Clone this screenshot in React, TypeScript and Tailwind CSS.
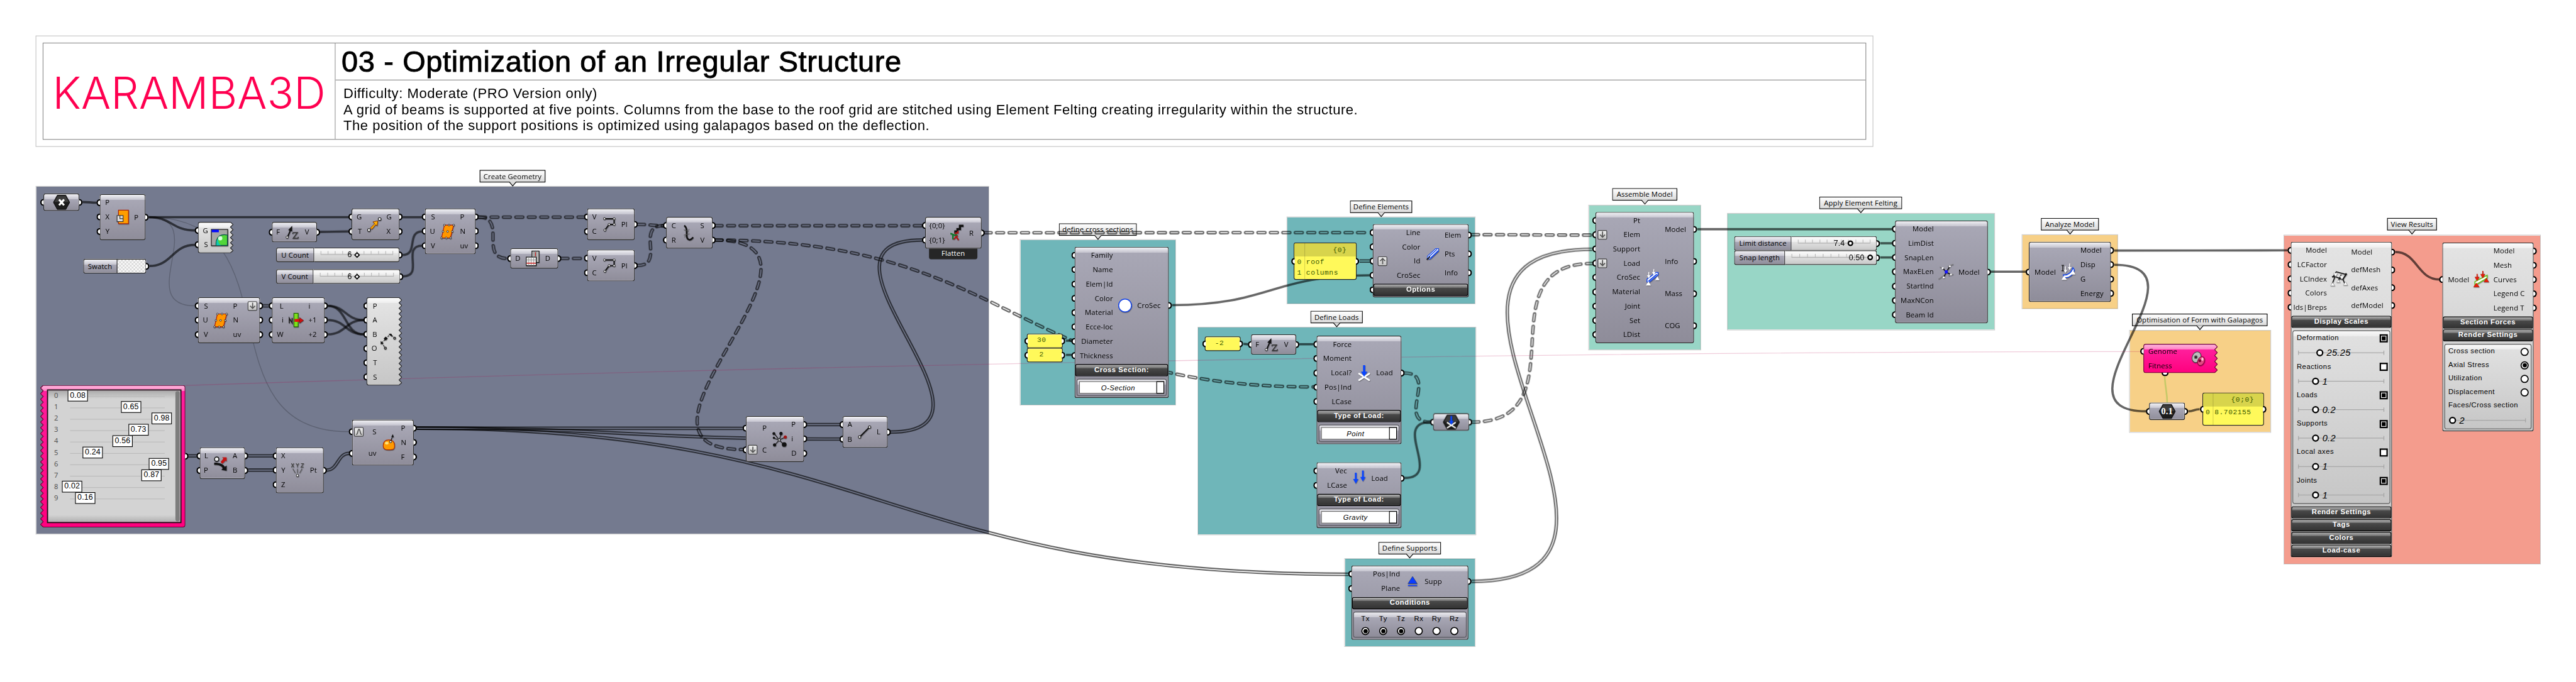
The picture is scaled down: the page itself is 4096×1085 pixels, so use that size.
import React from "react";

/* ---------- wires ---------- */

type WireKind = "single" | "double" | "dashed" | "thin";
type Wire = [WireKind, number, number, number, number];

const wires: Wire[] = [
  ["single", 232, 568, 272, 570],
  ["single", 418, 610.6, 980, 610.6],
  ["single", 418, 610.6, 548, 648],
  ["single", 420, 748, 548, 688.6],
  ["thin", 418, 610.6, 548, 860],
  ["thin", 418, 610.6, 981, 1214],
  ["double", 739, 860, 756, 860],
  ["single", 899, 652, 980, 650.6],
  ["single", 1131, 610.6, 1187, 610.6],
  ["single", 1131, 717, 1187, 650.6],
  ["single", 1133, 777, 1187, 690.6],
  ["single", 921, 860, 1022, 900],
  ["single", 921, 860, 1022, 940],
  ["single", 921, 900, 1022, 940],
  ["single", 921, 940, 1022, 900],
  ["dashed", 1345, 610.6, 1642, 610.6],
  ["dashed", 1345, 610.6, 1426, 726.7],
  ["dashed", 1577, 726.7, 1642, 726.7],
  ["dashed", 1792, 630.8, 1864, 634.6],
  ["dashed", 1792, 746.6, 1864, 634.6],
  ["dashed", 2010, 634.6, 2592, 634.6],
  ["dashed", 2010, 675, 3692, 1088],
  ["dashed", 2010, 675, 2088, 1264],
  ["dashed", 2766, 654.5, 3850, 654],
  ["dashed", 4136, 660, 4475, 661],
  ["dashed", 3947, 1049, 4020, 1187],
  ["single", 3947, 1344, 4020, 1187],
  ["dashed", 4137, 1187, 4475, 741],
  ["double", 529, 1282, 553, 1282],
  ["double", 697, 1282, 767, 1282],
  ["double", 697, 1322, 767, 1322],
  ["double", 918, 1322, 981, 1275],
  ["double", 1171, 1204, 2088, 1204.6],
  ["double", 1171, 1204, 2360, 1234.7],
  ["double", 1171, 1204, 3790, 1615],
  ["double", 2268, 1194, 2360, 1194],
  ["double", 2502, 1215, 2592, 675],
  ["double", 4136, 1635, 4475, 701],
  ["single", 2996, 958, 3012, 958],
  ["single", 2996, 998, 3012, 998],
  ["single", 3294, 858, 3850, 774],
  ["double", 3821, 734, 3850, 734],
  ["single", 3495, 967, 3508, 968],
  ["single", 3652, 968, 3692, 968],
  ["single", 4770, 644.5, 5318, 644.5],
  ["single", 5284, 684, 5318, 684],
  ["single", 5284, 724, 5318, 724],
  ["single", 5596, 764, 5694, 764],
  ["single", 5942, 704.6, 6430, 704],
  ["single", 5942, 744.6, 6032, 1156.6],
  ["single", 6150, 1156.6, 6182, 1150.7],
  ["single", 6732, 708.5, 6856, 786],
];

function wirePath([, x0, y0, x1, y1]: Wire) {
  const h = Math.max(Math.abs(x1 - x0) / 2, Math.abs(y1 - y0) * 0.7);
  return `M${x0} ${y0}C${x0 + h} ${y0} ${x1 - h} ${y1} ${x1} ${y1}`;
}

function Wires() {
  return (
    <svg className="pointer-events-none absolute inset-0 h-full w-full" viewBox="0 0 7240 1918" fill="none">
      {wires.map((w, i) => {
        const d = wirePath(w);
        if (w[0] === "thin") return <path key={i} d={d} stroke="#000" strokeOpacity={0.2} strokeWidth={2.5} />;
        if (w[0] === "single") return <path key={i} d={d} stroke="#000" strokeOpacity={0.6} strokeWidth={6.4} />;
        const dash = w[0] === "dashed" ? "19 16" : undefined;
        const cap = w[0] === "dashed" ? "round" : "butt";
        const left = Math.min(w[1], w[3]) - 200;
        const top = Math.min(w[2], w[4]) - 30;
        const width = Math.abs(w[3] - w[1]) + 400;
        const height = Math.abs(w[4] - w[2]) + 60;
        return (
          <g key={i}>
            <mask id={`wire-${i}`} maskUnits="userSpaceOnUse" x={left} y={top} width={width} height={height}>
              <path d={d} stroke="#fff" strokeWidth={10} strokeDasharray={dash} strokeLinecap={cap} />
              <path d={d} stroke="#000" strokeWidth={2.6} strokeDasharray={dash} strokeLinecap={cap} />
            </mask>
            <g mask={`url(#wire-${i})`}>
              <rect x={left} y={top} width={width} height={height} fill="#000" fillOpacity={0.6} />
            </g>
          </g>
        );
      })}
      <path d="M521 1084C2000 1035 4000 990 6015 988.7" stroke="#b4004b" strokeOpacity={0.2} strokeWidth={2.4} />
      <path d="M6084 1058C6085 1090 6091 1100 6091 1134" stroke="#7bbf3a" strokeOpacity={0.4} strokeWidth={4.5} />
    </svg>
  );
}

/* ---------- icons ---------- */

const icons: Record<string, React.ReactNode> = {
  plane: (
    <>
      <rect x="14" y="4" width="28" height="38" fill="#ff9d00" stroke="#a81800" strokeWidth="2" />
      <rect x="10" y="19" width="17" height="17" fill="#ddd" stroke="#333" strokeWidth="2" />
      <path d="M18 19v9h9" stroke="#333" strokeWidth="2" fill="none" />
    </>
  ),
  preview: (
    <>
      <rect x="1" y="1" width="46" height="46" fill="#a6a6a6" stroke="#111" strokeWidth="2" />
      <rect x="2" y="2" width="20" height="7" fill="#0008ff" />
      <path d="M14 46C13 22 26 13 46 17V46Z" fill="#52d63a" stroke="#08564a" strokeWidth="2" />
      <circle cx="26" cy="26" r="6" fill="#d8ffe0" />
      <path d="M15 46c0-12 2-16 5-19 0 9 2 15 8 19z" fill="#10c8b0" />
    </>
  ),
  divide: (
    <>
      <path d="M15 6H41L32 42H7Z" fill="#ff9600" stroke="#b01800" strokeWidth="2" />
      {[[15, 6], [28, 6], [41, 6], [11, 24], [24, 24], [37, 24], [7, 42], [20, 42], [32, 42]].map(([x, y]) => (
        <circle key={`${x}-${y}`} cx={x} cy={y} r="2.4" fill="#eee" stroke="#222" strokeWidth="1.6" />
      ))}
    </>
  ),
  unitz: (
    <>
      <path d="M10 38L20 14" stroke="#111" strokeWidth="3.5" />
      <path d="M12 18L23 6V22Z" fill="#111" />
      <circle cx="9" cy="38" r="3.2" fill="#fff" stroke="#111" strokeWidth="1.6" />
      <path d="M25 25H38L26 41H40M25 25V29M40 41V37" stroke="#333" strokeWidth="2.6" fill="none" />
    </>
  ),
  move: (
    <>
      <path d="M13 34L25 22L20 17L34 14L32 28L28 25L17 38Z" fill="#ffae00" stroke="#7a2a00" strokeWidth="1.6" />
      <circle cx="9" cy="40" r="4" fill="#fff" stroke="#222" strokeWidth="2" />
      <circle cx="39" cy="9" r="4" fill="#fff" stroke="#222" strokeWidth="2" />
    </>
  ),
  relitem: (
    <>
      <path d="M5 32V18L13 31V17" stroke="#222" strokeWidth="3" fill="none" />
      <rect x="18" y="4" width="12" height="38" fill="#7be01c" stroke="#1c5f00" strokeWidth="2" />
      <rect x="20" y="20" width="14" height="8" fill="#e01010" />
      <path d="M34 16L45 24L34 32Z" fill="#d01010" stroke="#500" />
    </>
  ),
  curve: (
    <>
      <path d="M6 28L30 3L42 15M6 28L16 43" stroke="#111" strokeWidth="2" strokeDasharray="5 3" fill="none" />
      <path d="M3 32V23L11 30ZM25 3H34V11Z" fill="#111" />
      <rect x="13" y="12" width="8" height="8" transform="rotate(45 17 16)" fill="#111" />
      <circle cx="16" cy="43" r="3" fill="#888" stroke="#222" strokeWidth="2" />
      <circle cx="42" cy="15" r="3" fill="#888" stroke="#222" strokeWidth="2" />
    </>
  ),
  evalsrf: (
    <>
      <path d="M8 32C8 20 16 16 24 16S40 20 40 32 34 44 24 44 8 42 8 32Z" fill="#ff9a00" stroke="#a82a00" strokeWidth="2" />
      <ellipse cx="18" cy="25" rx="5" ry="4" fill="#ffe27a" />
      <path d="M29 20L34 6" stroke="#111" strokeWidth="2" />
      <path d="M35 0L38 9L31 7Z" fill="#111" />
      <circle cx="29" cy="21" r="3" fill="#fff" stroke="#111" strokeWidth="1.6" />
    </>
  ),
  split: (
    <>
      <circle cx="13" cy="12" r="6" fill="#eee" stroke="#111" strokeWidth="2.4" />
      <path d="M6 22C22 22 32 26 36 34L41 30V45L26 42L30 38C26 30 20 28 6 28Z" fill="#111" />
      <path d="M24 20L32 10L28 7H41V19L38 16L29 25Z" fill="#c01414" />
    </>
  ),
  xyz: (
    <>
      <path d="M6 4L13 15M13 4L6 15M19 4L23 9.5L27 4M23 9.5V15M33 4.5H40L33 14.5H40" stroke="#444" strokeWidth="2" fill="none" />
      <path d="M10 19L17 31M23 19V31M36 19L29 31" stroke="#555" strokeWidth="2" />
      <circle cx="23" cy="38" r="3.2" fill="#fff" stroke="#333" strokeWidth="1.8" />
    </>
  ),
  flip: (
    <>
      <rect x="21" y="3" width="20" height="32" fill="#bbb" stroke="#111" strokeWidth="2" />
      <path d="M27 3v32M34 3v32" stroke="#777" strokeWidth="1.5" />
      <path d="M31 6v12" stroke="#c01414" strokeWidth="2" />
      <rect x="5" y="20" width="28" height="24" fill="#eee" stroke="#111" strokeWidth="2" />
      <path d="M5 28h28M12 20v24M19 20v24M26 20v24" stroke="#888" strokeWidth="1.5" />
      <path d="M6 37h26" stroke="#d01414" strokeWidth="2.5" />
    </>
  ),
  pline: (
    <>
      <path d="M11 8H38V24H24L12 40" stroke="#111" strokeWidth="3.4" fill="none" />
      {[[11, 8], [38, 8], [38, 24], [24, 24], [12, 40]].map(([x, y]) => (
        <circle key={`${x}-${y}`} cx={x} cy={y} r="3" fill="#fff" stroke="#111" strokeWidth="1.6" />
      ))}
    </>
  ),
  explode: (
    <>
      <path d="M13 3C20 8 20 14 20 20V30C20 44 30 48 38 36" stroke="#111" strokeWidth="4.5" fill="none" />
      <path d="M12 15l14 5M12 30l16-4M14 36l4-6M27 13l-5 6" stroke="#555" strokeWidth="1.6" />
    </>
  ),
  entwine: (
    <>
      <path d="M42 4H32V13H25V20H19V26" stroke="#111" strokeWidth="6" fill="none" />
      <path d="M26 18V24H20V32L28 44M26 31L14 42" stroke="#b01818" strokeWidth="4" fill="none" />
      <path d="M5 26C12 26 16 34 24 29M12 30V42" stroke="#0f7a2a" strokeWidth="4" fill="none" />
    </>
  ),
  closest: (
    <>
      <path d="M24 26L10 8M24 26L30 8M24 26L42 18M24 26L12 40M24 26L36 38M24 26L8 21" stroke="#111" strokeWidth="2" />
      <circle cx="9" cy="8" r="4" fill="#111" />
      <circle cx="29" cy="8" r="4.5" fill="#111" />
      <circle cx="9" cy="20" r="3" fill="#111" />
      <circle cx="11" cy="40" r="4.5" fill="#111" />
      <circle cx="38" cy="39" r="6.5" fill="#111" />
      <circle cx="41" cy="18" r="4.5" fill="#a01414" />
      <circle cx="24" cy="26" r="3" fill="#fff" stroke="#111" strokeWidth="1.5" />
    </>
  ),
  line: (
    <>
      <path d="M11 37L37 11" stroke="#111" strokeWidth="3.5" />
      <circle cx="10" cy="38" r="3.5" fill="#fff" stroke="#111" strokeWidth="1.8" />
      <circle cx="38" cy="10" r="3.5" fill="#fff" stroke="#111" strokeWidth="1.8" />
    </>
  ),
  circle: <circle cx="24" cy="24" r="18" fill="#fff" stroke="#1242e8" strokeWidth="2.6" />,
  beam: (
    <>
      <path d="M10 30L33 9H41V16L18 38H10Z" fill="#fff" stroke="#1546e6" strokeWidth="2" />
      <path d="M13 33L37 11M18 36L40 15" stroke="#1546e6" strokeWidth="2.5" />
      <path d="M8 40L17 32" stroke="#111" strokeWidth="3" />
    </>
  ),
  pointload: (
    <>
      <path d="M10 26L38 44M38 26L10 44" stroke="#fff" strokeWidth="5" strokeLinecap="round" />
      <path d="M21 2H27V20H33L24 34L15 20H21Z" fill="#0a45ff" />
    </>
  ),
  gravity: <path d="M12 8H17V26H22L14.5 39L7 26H12ZM32 2H37V20H42L34.5 33L27 20H32Z" fill="#0a45ff" />,
  support: (
    <>
      <path d="M24 10L37 30H11Z" fill="#0a3dff" stroke="#23305a" strokeWidth="1" />
      <path d="M11 35.5H37" stroke="#0a3dff" strokeWidth="2.8" />
    </>
  ),
  assemble: (
    <>
      <path d="M8 36V28L33 9H39V16L15 36Z" fill="#fff" stroke="#1546e6" strokeWidth="2.5" />
      <path d="M12 34L36 14" stroke="#1546e6" strokeWidth="3" />
      <path d="M27 0V13M13 8V22" stroke="#fff" strokeWidth="2.6" />
      <path d="M22 8H32L27 17ZM8 17H18L13 26ZM12 34L19 46H5ZM37 20L43 31H31Z" fill="#fff" />
    </>
  ),
  felting: (
    <>
      <path d="M2 44L20 32M28 8L44 2M6 10L18 14M30 34L44 30" stroke="#777" strokeWidth="2" />
      <path d="M14 13L24 24L34 8M24 24L17 39M24 24L37 31" stroke="#111" strokeWidth="2.6" fill="none" />
      <rect x="20" y="19" width="8" height="9" fill="#1414ff" />
      {[[14, 13], [34, 8], [17, 39], [37, 31]].map(([x, y]) => (
        <circle key={`${x}-${y}`} cx={x} cy={y} r="2.8" fill="#fff" />
      ))}
    </>
  ),
  analyze: (
    <>
      <path d="M5 5H12M8.5 5V20M5 20H12" stroke="#222" strokeWidth="2.2" />
      <path d="M10 32C24 34 34 24 37 12L41 18C38 32 26 42 12 39Z" fill="#fff" stroke="#1546e6" strokeWidth="2.5" />
      <path d="M28 0V14M16 8V24" stroke="#fff" strokeWidth="2.5" />
      <path d="M23 10H33L28 19ZM11 18H21L16 27ZM12 34L20 46H5ZM38 20L44 31H33Z" fill="#fff" />
    </>
  ),
  galapagos: (
    <>
      <ellipse cx="19" cy="20" rx="13" ry="17" transform="rotate(25 19 20)" fill="#bdbdbd" stroke="#444" strokeWidth="2" />
      <circle cx="17" cy="20" r="4.5" fill="#222" stroke="#666" strokeWidth="2" />
      <ellipse cx="33" cy="32" rx="10" ry="14" transform="rotate(25 33 32)" fill="#e24b84" stroke="#8a0036" strokeWidth="2" />
      <circle cx="29" cy="31" r="4.5" fill="#7a0030" />
      <ellipse cx="37" cy="26" rx="3" ry="5" fill="#ffd0e0" />
    </>
  ),
  view: (
    <>
      <path d="M4 40L14 14M20 34L30 12M40 38L34 22M44 8L36 24" stroke="#111" strokeWidth="2.6" />
      <path d="M6 20L16 4L45 12M4 18C14 14 24 24 34 26L46 10" stroke="#111" strokeWidth="2.6" fill="none" />
      <path d="M8 8H20L14 18ZM26 16H38L32 26Z" fill="#fff" stroke="#aaa" />
      <path d="M6 34L12 44H0ZM22 26L27 34H17ZM42 32L48 42H36Z" fill="#fff" stroke="#888" />
    </>
  ),
  beamview: (
    <>
      <path d="M6 30L40 12V20L6 40Z" fill="#fff" stroke="#6fbf1e" strokeWidth="3" />
      <path d="M28 0V12M12 8V20" stroke="#d01808" strokeWidth="3" />
      <path d="M22 9H34L28 20ZM6 17H18L12 28ZM10 34L18 45H2ZM38 20L45 31H31Z" fill="#ee1c08" stroke="#a01000" />
    </>
  ),
};

function Icon({ name, size = 48 }: { name: string; size?: number }) {
  return (
    <svg viewBox="0 0 48 48" fill="none" className="shrink-0 overflow-visible drop-shadow-[1px_2px_1px_rgba(0,0,0,0.35)]" style={{ width: size, height: size }}>
      {icons[name]}
    </svg>
  );
}

/* ---------- building blocks ---------- */

const place = (x: number, y: number, w: number, h: number) => ({ left: x, top: y, width: w, height: h });

const GREY = "rounded-[6px] bg-[linear-gradient(#f0f0f4_2px,#c5c4cf_16px,#a8a7b5_16px,#8e8c99)] shadow-[inset_0_0_0_2px_#262626,inset_0_0_0_3px_rgba(255,255,255,0.35)]";
const LIGHT = "rounded-[6px] bg-[linear-gradient(#fdfdfd_2px,#eeeeee_16px,#e3e3e3_16px,#c6c6c6)] shadow-[inset_0_0_0_2px_#262626,inset_0_0_0_3px_rgba(255,255,255,0.35)]";

function Port({ side }: { side: "l" | "r" }) {
  return side === "l" ? (
    <span className="absolute top-1/2 -left-[9px] h-5 w-[10px] -translate-y-1/2 rounded-l-full border-4 border-r-0 border-black bg-white" />
  ) : (
    <span className="absolute top-1/2 -right-[9px] h-5 w-[10px] -translate-y-1/2 rounded-r-full border-4 border-l-0 border-black bg-white" />
  );
}

function Group({ x, y, w, h, tone }: { x: number; y: number; w: number; h: number; tone: string }) {
  return <div className={`absolute border-2 border-black/20 bg-clip-padding ${tone}`} style={place(x, y, w, h)} />;
}

function Label({ x, y, w, children }: { x: number; y: number; w: number; children: string }) {
  return (
    <div className="absolute flex flex-col items-center" style={{ left: x, top: y, width: w }}>
      <div className="flex h-[35px] w-full items-center justify-center border-2 border-black bg-linear-to-b from-white to-[#dadada] text-[20px] leading-none whitespace-nowrap">
        {children}
      </div>
      <svg viewBox="0 0 22 14" className="-mt-[2px] h-[14px] w-[22px]">
        <path d="M1 0L11 12L21 0" fill="#dadada" stroke="#000" strokeWidth="2" />
      </svg>
    </div>
  );
}

type BodyProps = {
  ins?: string[];
  outs?: string[];
  inW?: number;
  outW?: number;
  icon?: string;
  h: number;
  outButton?: React.ReactNode;
  inButtons?: Record<number, React.ReactNode>;
};

function Body({ ins = [], outs = [], inW = 0, outW = 0, icon, h, outButton, inButtons = {} }: BodyProps) {
  return (
    <div className="flex py-1" style={{ height: h }}>
      <div className="flex flex-col" style={{ width: inW }}>
        {ins.map((t, i) => (
          <div key={i} className="relative flex flex-1 items-center justify-end whitespace-nowrap">
            <Port side="l" />
            {inButtons[i] && <span className="absolute left-[6px]">{inButtons[i]}</span>}
            {t}
          </div>
        ))}
      </div>
      <div className="flex flex-1 items-center justify-center">{icon && <Icon name={icon} />}</div>
      <div className="flex flex-col" style={{ width: outW }}>
        {outs.map((t, i) => (
          <div key={i} className="relative flex flex-1 items-center whitespace-nowrap">
            <Port side="r" />
            {t}
            {i === 0 && outButton && <span className="absolute right-2">{outButton}</span>}
          </div>
        ))}
      </div>
    </div>
  );
}

type NodeProps = Omit<BodyProps, "h"> & {
  x: number;
  y: number;
  w: number;
  h: number;
  bodyH?: number;
  light?: boolean;
  children?: React.ReactNode;
};

function Node({ x, y, w, h, bodyH, light, children, ...body }: NodeProps) {
  return (
    <div className={`absolute ${light ? LIGHT : GREY}`} style={place(x, y, w, h)}>
      <Body h={bodyH ?? h} {...body} />
      {children}
    </div>
  );
}

function ModButton({ kind }: { kind: "down" | "up" | "curve" }) {
  return (
    <span className="flex h-[27px] w-[27px] items-center justify-center rounded-[4px] border-2 border-[#444] bg-linear-to-b from-[#eee] to-[#c4c4c4]">
      <svg viewBox="0 0 20 20" className="h-5 w-5" fill="none" stroke="#555" strokeWidth="3">
        {kind === "down" && <path d="M10 1V17M3 10L10 17L17 10" />}
        {kind === "up" && <path d="M10 19V4M3 10L10 3L17 10" />}
        {kind === "curve" && <path d="M2 18C8 18 6 3 10 3S12 18 18 18" />}
      </svg>
    </span>
  );
}

function Bar({ children }: { children: string }) {
  return (
    <div className="mx-[2px] flex h-[34px] items-center justify-center rounded-[5px] border-2 border-black bg-[linear-gradient(#b4b4b4,#6c6c6c_9px,#4a4a4a_9px,#333)] pb-1 font-['Liberation_Sans',sans-serif] text-[20px] leading-none font-bold tracking-[0.9px] whitespace-nowrap text-white">
      {children}
    </div>
  );
}

function Dropdown({ children }: { children: string }) {
  return (
    <div className="mx-[6px] mt-[7px] h-[49px] rounded-[7px] border-2 border-[#5a5a60] bg-[linear-gradient(#ececf0,#c0bfca_14px,#a3a2b0_14px,#93919f)] p-[5px]">
      <div className="flex h-[35px] border-2 border-[#666] bg-white">
        <div className="flex flex-1 items-center justify-center font-['Liberation_Sans',sans-serif] text-[20px] leading-none tracking-[0.8px] italic">{children}</div>
        <div className="-my-[2px] -mr-[2px] w-[22px] border-2 border-black" />
      </div>
    </div>
  );
}

function jagPath(w: number, h: number) {
  const n = Math.round(h / 16);
  const step = h / n;
  let d = `M${w - 8} 1`;
  for (let i = 0; i < n; i++) d += `L${w - 1} ${(i + 0.5) * step}L${w - 8.5} ${Math.min((i + 1) * step, h - 1)}`;
  return d + `H7Q1 ${h - 1} 1 ${h - 7}V7Q1 1 7 1Z`;
}

function Jagged({ w, h, tone, flip }: { w: number; h: number; tone: "light" | "pink"; flip?: boolean }) {
  const split = 15 / h;
  const c = tone === "pink" ? ["#ffb9de", "#ff7fc4", "#ff1f9c", "#ff007e", "#6d0038"] : ["#fdfdfd", "#eeeeee", "#e3e3e3", "#c6c6c6", "#262626"];
  return (
    <svg viewBox={`0 0 ${w} ${h}`} className={`absolute inset-0 h-full w-full ${flip ? "-scale-x-100" : ""}`}>
      <defs>
        <linearGradient id={`jag-${tone}-${h}`} x1="0" y1="0" x2="0" y2="1">
          <stop offset="0" stopColor={c[0]} />
          <stop offset={split} stopColor={c[1]} />
          <stop offset={split} stopColor={c[2]} />
          <stop offset="1" stopColor={c[3]} />
        </linearGradient>
      </defs>
      <path d={jagPath(w, h)} fill={`url(#jag-${tone}-${h})`} stroke={c[4]} strokeWidth="2" />
    </svg>
  );
}

function JagNode({ x, y, w, h, ...body }: Omit<BodyProps, "h"> & { x: number; y: number; w: number; h: number }) {
  return (
    <div className="absolute" style={place(x, y, w, h)}>
      <Jagged w={w} h={h} tone="light" />
      <div className="relative pr-2">
        <Body h={h} {...body} />
      </div>
    </div>
  );
}

function Param({ x, y, children }: { x: number; y: number; children: React.ReactNode }) {
  return (
    <div className={`absolute flex items-center justify-center ${GREY}`} style={place(x, y, 101, 49)}>
      <Port side="l" />
      <Port side="r" />
      <div className="relative flex h-[42px] w-[48px] items-center justify-center">
        <svg viewBox="0 0 48 42" className="absolute inset-0 h-full w-full">
          <path d="M12 1H36L47 21L36 41H12L1 21Z" fill="#1c1c1c" stroke="#000" strokeWidth="1.5" />
          <path d="M13 3H35L44 20H4Z" fill="#3c3c3c" />
        </svg>
        <div className="relative flex items-center justify-center">{children}</div>
      </div>
    </div>
  );
}

function Slider({ x, y, w, label, labelW, value, knob, shape }: { x: number; y: number; w: number; label: string; labelW: number; value: string; knob: number; shape: "diamond" | "ring" }) {
  return (
    <div className={`absolute flex ${LIGHT}`} style={place(x, y, w, 41)}>
      <div className={`flex items-center justify-center whitespace-nowrap ${GREY} rounded-r-none`} style={{ width: labelW }}>
        {label}
      </div>
      <div className="relative flex-1">
        <div className="absolute inset-x-[18px] top-[10px] flex h-[11px] justify-between border-b-2 border-[#b0b0b0]">
          {Array.from({ length: 11 }, (_, i) => (
            <span key={i} className="w-[2px] bg-[#b8b8b8]" />
          ))}
        </div>
        <div className="absolute top-0 flex h-full -translate-x-full items-center gap-[8px] pb-[2px]" style={{ left: knob }}>
          <span className="font-['Liberation_Sans',sans-serif] text-[22px] leading-none">{value}</span>
          {shape === "diamond" ? (
            <span className="mt-[2px] mr-[1px] block h-[12px] w-[12px] rotate-45 border-[3px] border-black bg-white" />
          ) : (
            <span className="mt-[1px] block h-[16px] w-[16px] rounded-full border-[4px] border-black bg-white" />
          )}
        </div>
      </div>
      <Port side="r" />
    </div>
  );
}

function SmallPanel({ x, y, children }: { x: number; y: number; children: string }) {
  return (
    <div className="absolute flex items-center justify-center rounded-[6px] border-2 border-[#262626] bg-[#fff95a] pr-[18px] pb-1 font-['Liberation_Mono',monospace] text-[20px] tracking-[0.9px] text-[#3c5a00] shadow-[inset_0_1px_0_1px_#fffcb0]" style={place(x, y, 101, 41)}>
      <Port side="l" />
      <Port side="r" />
      {children}
    </div>
  );
}

function DataPanel({ x, y, w, h, path, gutter, rows }: { x: number; y: number; w: number; h: number; path: string; gutter: number; rows: string[] }) {
  return (
    <div className="absolute rounded-[6px] border-2 border-[#262626] bg-[#fff95a] font-['Liberation_Mono',monospace] text-[20px] leading-none tracking-[0.9px] text-[#3c5a00]" style={place(x, y, w, h)}>
      <Port side="l" />
      <Port side="r" />
      <div className="flex h-[37px] items-center justify-end rounded-t-[4px] bg-[#d8d44c] pr-[26px]">{path}</div>
      {rows.map((r, i) => (
        <div key={i} className="flex h-[31px] items-center">
          <span className="text-center" style={{ width: gutter }}>{i}</span>
          <span className="pl-[5px]">{r}</span>
        </div>
      ))}
      <span className="absolute inset-y-0 w-[2px] bg-black/15" style={{ left: gutter }} />
    </div>
  );
}

function Ring({ on }: { on?: boolean }) {
  return (
    <span className="flex h-[23px] w-[23px] items-center justify-center rounded-full border-[3px] border-black bg-white">
      {on && <span className="h-[12px] w-[12px] rounded-full bg-black" />}
    </span>
  );
}

/* ---------- header ---------- */

function Header() {
  return (
    <header className="absolute top-[100px] left-[100px] h-[313px] w-[5165px] border-2 border-[#c4c4c4] bg-white p-[18px]">
      <div className="flex h-full border-2 border-[#8c8c8c]">
        <div className="flex w-[821px] items-center justify-center border-r-2 border-[#9a9a9a] pt-[6px]">
          <span className="font-['Inter',sans-serif] text-[124px] leading-none font-light whitespace-nowrap text-[#ff0050]">KARAMBA3D</span>
        </div>
        <div className="flex flex-1 flex-col font-['Liberation_Sans',sans-serif] text-black">
          <h1 className="flex h-[104px] items-center border-b-2 border-[#8c8c8c] pl-[17px] text-[83px] leading-none tracking-[1.1px] whitespace-nowrap [-webkit-text-stroke:1.6px_#000]">
            03 - Optimization of an Irregular Structure
          </h1>
          <div className="pt-[14px] pl-[22px] text-[39px] leading-[45px] tracking-[0.93px] whitespace-nowrap">
            <p>Difficulty: Moderate (PRO Version only)</p>
            <p>A grid of beams is supported at five points. Columns from the base to the roof grid are stitched using Element Felting creating irregularity within the structure.</p>
            <p>The position of the support positions is optimized using galapagos based on the deflection.</p>
          </div>
        </div>
      </div>
    </header>
  );
}

/* ---------- gene pool ---------- */

const genes = [0.08, 0.65, 0.98, 0.73, 0.56, 0.24, 0.95, 0.87, 0.02, 0.16];

function GenePool() {
  return (
    <div className="absolute top-[1083px] left-[113px] h-[400px] w-[408px]">
      <Jagged w={408} h={400} tone="pink" flip />
      <div className="absolute top-[200px] right-0">
        <Port side="r" />
      </div>
      <div className="relative mt-[12px] ml-[19px] flex h-[376px] w-[378px] border-[3px] border-[#141414] bg-[linear-gradient(#aaa,#d3d3d3_24px,#d3d3d3_350px,#b0b0b0)]">
        <div className="flex flex-1 flex-col">
          {genes.map((g, i) => (
            <div key={i} className="relative flex h-8 items-center">
              <span className="absolute top-[16px] left-[62px] h-[2px] w-[266px] bg-[#bbb]" />
              <span className="w-[34px] pb-[5px] pl-3 text-center font-['Noto_Sans',sans-serif] text-[20px] leading-none text-[#555]">{i}</span>
              <span className="absolute -top-[2px] flex h-[33px] w-[57px] items-center justify-center border-2 border-black bg-white pb-[3px] font-['Liberation_Sans',sans-serif] text-[22px] leading-none" style={{ left: 34 + 262.5 * g }}>
                {g.toFixed(2)}
              </span>
            </div>
          ))}
        </div>
        <div className="my-[2px] mr-[2px] w-3 rounded-full bg-[#7d7d7d]" />
      </div>
    </div>
  );
}

/* ---------- result nodes ---------- */

const scales: [string, boolean, number, string][] = [
  ["Deformation", true, 76, "25.25"],
  ["Reactions", false, 64, "1"],
  ["Loads", true, 64, "0.2"],
  ["Supports", true, 64, "0.2"],
  ["Local axes", false, 64, "1"],
  ["Joints", true, 64, "1"],
];

function ModelView() {
  return (
    <Node light x={6438} y={680} w={285} h={887} bodyH={208} icon="view" inW={102} outW={115} ins={["Model", "LCFactor", "LCIndex", "Colors", "Ids|Breps"]} outs={["Model", "defMesh", "defAxes", "defModel"]}>
      <Bar>Display Scales</Bar>
      <div className="mx-[5px] mt-[7px] mb-[7px] h-[488px] rounded-[7px] border-2 border-[#5a5a5a] bg-[linear-gradient(#fafafa,#ececec_14px,#e0e0e0_14px,#c6c6c6)] font-['Liberation_Sans',sans-serif]">
        {scales.map(([name, on, knob, value]) => (
          <div key={name} className="h-[80.2px]">
            <div className="flex h-[41px] items-center justify-between pr-[5px] pl-[10px]">
              <span className="pb-1 text-[20px] leading-none tracking-[0.9px]">{name}</span>
              <span className="flex h-[23px] w-[23px] items-center justify-center border-[4px] border-black bg-white">
                {on && <span className="h-[11px] w-[11px] bg-black" />}
              </span>
            </div>
            <div className="relative flex h-[39px] items-center">
              <span className="absolute left-[14px] h-3 w-[242px] border-x-2 border-[#a4a4a4]" />
              <span className="absolute left-[14px] h-[2px] w-[242px] bg-[#a4a4a4]" />
              <span className="relative h-5 w-5 shrink-0 rounded-full border-[4px] border-black bg-white" style={{ marginLeft: knob - 11 }} />
              <span className="relative pl-[9px] text-[26px] leading-none tracking-[0.5px] italic">{value}</span>
            </div>
          </div>
        ))}
      </div>
      <div className="flex flex-col gap-[2px]">
        <Bar>Render Settings</Bar>
        <Bar>Tags</Bar>
        <Bar>Colors</Bar>
        <Bar>Load-case</Bar>
      </div>
    </Node>
  );
}

function BeamView() {
  return (
    <Node light x={6864} y={682} w={257} h={531} bodyH={208} icon="beamview" inW={76} outW={113} ins={["Model"]} outs={["Model", "Mesh", "Curves", "Legend C", "Legend T"]}>
      <div className="flex flex-col gap-[2px]">
        <Bar>Section Forces</Bar>
        <Bar>Render Settings</Bar>
      </div>
      <div className="mx-[6px] mt-[7px] h-[240px] rounded-[7px] border-2 border-[#5a5a5a] bg-[linear-gradient(#fafafa,#ececec_14px,#e0e0e0_14px,#c6c6c6)] pt-[1px] font-['Liberation_Sans',sans-serif] text-[20px] leading-none tracking-[0.8px]">
        {["Cross section", "Axial Stress", "Utilization", "Displacement"].map((t) => (
          <div key={t} className="flex h-[38px] items-center justify-between pr-[6px] pl-[9px]">
            <span className="pb-1">{t}</span>
            <Ring on={t === "Axial Stress"} />
          </div>
        ))}
        <div className="flex h-[38px] items-center pb-1 pl-[9px] whitespace-nowrap">Faces/Cross section</div>
        <div className="relative flex h-[44px] items-center">
          <span className="absolute right-[14px] left-[22px] h-[2px] bg-[#a4a4a4]" />
          <span className="absolute right-[14px] h-3 w-[2px] bg-[#a4a4a4]" />
          <span className="relative ml-[11px] h-5 w-5 rounded-full border-[4px] border-black bg-white" />
          <span className="relative pl-[9px] text-[26px] italic">2</span>
        </div>
      </div>
    </Node>
  );
}

/* ---------- canvas ---------- */

export default function App() {
  return (
    <main className="relative h-[1085px] w-[4096px] overflow-hidden bg-white">
      <div className="absolute top-0 left-0 h-[1918px] w-[7240px] origin-top-left scale-[0.56575] font-['Open_Sans','Noto_Sans',sans-serif] text-[20px] leading-none tracking-[0.25px] text-black">
        <Header />

        <Group x={100} y={523} w={2680} h={980} tone="bg-[#747a8f]" />
        <Group x={2866} y={673} w={439} h={467} tone="bg-[#6fb6b9]" />
        <Group x={3616} y={609} w={531} h={246} tone="bg-[#6fb6b9]" />
        <Group x={3366} y={919} w={783} h={586} tone="bg-[#6fb6b9]" />
        <Group x={3778} y={1570} w={369} h={249} tone="bg-[#6fb6b9]" />
        <Group x={4464} y={576} w={317} h={409} tone="bg-[#98d6c6]" />
        <Group x={4854} y={599} w={753} h={330} tone="bg-[#98d6c6]" />
        <Group x={5682} y={659} w={271} h={210} tone="bg-[#f7d087]" />
        <Group x={5984} y={928} w={399} h={289} tone="bg-[#f7d087]" />
        <Group x={6418} y={660} w={723} h={927} tone="bg-[#f49c8d]" />

        <Label x={1348} y={478} w={185}>Create Geometry</Label>
        <Label x={2976} y={628} w={219}>define cross sections</Label>
        <Label x={3794} y={564} w={175}>Define Elements</Label>
        <Label x={3683} y={874} w={147}>Define Loads</Label>
        <Label x={3874} y={1524} w={176}>Define Supports</Label>
        <Label x={4531} y={529} w={183}>Assemble Model</Label>
        <Label x={5113} y={553} w={233}>Apply Element Felting</Label>
        <Label x={5736} y={613} w={163}>Analyze Model</Label>
        <Label x={5992} y={882} w={381}>Optimisation of Form with Galapagos</Label>
        <Label x={6709} y={613} w={140}>View Results</Label>

        <Wires />

        <Param x={122} y={544}>
          <svg viewBox="0 0 20 20" className="h-5 w-5">
            <path d="M3 2L17 18M17 2L3 18" stroke="#fff" strokeWidth="5.5" />
          </svg>
        </Param>
        <Node x={280} y={546} w={129} h={129} icon="plane" inW={28} outW={32} ins={["P", "X", "Y"]} outs={["P"]} />
        <JagNode x={556} y={624} w={100} h={88} icon="preview" inW={29} ins={["G", "S"]} />
        <div className={`absolute flex ${GREY}`} style={place(234, 728, 177, 41)}>
          <div className="flex w-[96px] items-center justify-center border-r-2 border-[#262626]">Swatch</div>
          <div className="my-[2px] mr-[2px] flex-1 rounded-r-[5px] bg-[conic-gradient(#fafafa_25%,#d8d8d8_0_50%,#fafafa_0_75%,#d8d8d8_0)] bg-[size:10px_10px]" />
          <Port side="r" />
        </div>
        <Node x={556} y={836} w={175} h={129} icon="divide" inW={29} outW={76} ins={["S", "U", "V"]} outs={["P", "N", "uv"]} outButton={<ModButton kind="down" />} />
        <Node x={764} y={624} w={127} h={57} icon="unitz" inW={23} outW={34} ins={["F"]} outs={["V"]} />
        <Slider x={776} y={696} w={347} label="U Count" labelW={107} value="6" knob={127} shape="diamond" />
        <Slider x={776} y={757} w={349} label="V Count" labelW={105} value="6" knob={129} shape="diamond" />
        <Node x={988} y={586} w={135} h={89} icon="move" inW={29} outW={37} ins={["G", "T"]} outs={["G", "X"]} />
        <Node x={1194} y={586} w={143} h={129} icon="divide" inW={29} outW={44} ins={["S", "U", "V"]} outs={["P", "N", "uv"]} />
        <Node x={764} y={836} w={149} h={129} icon="relitem" inW={33} outW={46} ins={["L", "i", "W"]} outs={["i", "+1", "+2"]} />
        <JagNode x={1030} y={836} w={100} h={248} icon="curve" inW={30} ins={["P", "A", "B", "O", "T", "S"]} />
        <GenePool />
        <Node x={561} y={1258} w={128} h={89} icon="split" inW={24} outW={35} ins={["L", "P"]} outs={["A", "B"]} />
        <Node x={775} y={1258} w={135} h={129} icon="xyz" inW={27} outW={39} ins={["X", "Y", "Z"]} outs={["Pt"]} />
        <Node x={989} y={1180} w={174} h={129} icon="evalsrf" inW={69} outW={36} ins={["S", "uv"]} outs={["P", "N", "F"]} inButtons={{ 0: <ModButton kind="curve" /> }} />
        <Node x={1434} y={698} w={135} h={57} icon="flip" inW={29} outW={37} ins={["D"]} outs={["D"]} />
        <Node x={1650} y={586} w={134} h={89} icon="pline" inW={27} outW={38} ins={["V", "C"]} outs={["Pl"]} />
        <Node x={1650} y={702} w={134} h={89} icon="pline" inW={27} outW={38} ins={["V", "C"]} outs={["Pl"]} />
        <Node x={1872} y={610} w={131} h={89} icon="explode" inW={28} outW={35} ins={["C", "R"]} outs={["S", "V"]} />
        <div className="absolute flex items-center justify-center rounded-b-[6px] bg-[#262626] text-white" style={place(2611, 697, 136, 32)}>Flatten</div>
        <Node x={2600} y={610} w={159} h={89} icon="entwine" inW={56} outW={35} ins={["{0;0}", "{0;1}"]} outs={["R"]} />
        <Node x={2096} y={1170} w={164} h={129} icon="closest" inW={59} outW={36} ins={["P", "C"]} outs={["P", "i", "D"]} inButtons={{ 1: <ModButton kind="down" /> }} />
        <Node x={2368} y={1170} w={127} h={89} icon="line" inW={27} outW={31} ins={["A", "B"]} outs={["L"]} />

        <Node x={3020} y={694} w={265} h={425} bodyH={330} icon="circle" inW={108} outW={89} ins={["Family", "Name", "Elem|Id", "Color", "Material", "Ecce-loc", "Diameter", "Thickness"]} outs={["CroSec"]}>
          <Bar>Cross Section:</Bar>
          <Dropdown>O-Section</Dropdown>
        </Node>
        <SmallPanel x={2886} y={938}>30</SmallPanel>
        <SmallPanel x={2886} y={978}>2</SmallPanel>

        <Node x={3858} y={630} w={270} h={206} bodyH={168} icon="beam" inW={134} outW={68} ins={["Line", "Color", "Id", "CroSec"]} outs={["Elem", "Pts", "Info"]} inButtons={{ 2: <span className="ml-2 block"><ModButton kind="up" /></span> }}>
          <div className="relative">
            <Port side="l" />
            <Bar>Options</Bar>
          </div>
        </Node>
        <DataPanel x={3636} y={682} w={177} h={105} path="{0}" gutter={28} rows={["roof", "columns"]} />

        <SmallPanel x={3386} y={946}>-2</SmallPanel>
        <Node x={3516} y={940} w={127} h={57} icon="unitz" inW={23} outW={34} ins={["F"]} outs={["V"]} />
        <Node x={3700} y={944} w={239} h={305} bodyH={209} icon="pointload" inW={99} outW={71} ins={["Force", "Moment", "Local?", "Pos|Ind", "LCase"]} outs={["Load"]}>
          <Bar>Type of Load:</Bar>
          <Dropdown>Point</Dropdown>
        </Node>
        <Node x={3700} y={1300} w={239} h={185} bodyH={89} icon="gravity" inW={86} outW={85} ins={["Vec", "LCase"]} outs={["Load"]}>
          <Bar>Type of Load:</Bar>
          <Dropdown>Gravity</Dropdown>
        </Node>
        <Param x={4028} y={1162}>
          <Icon name="pointload" size={38} />
        </Param>

        <Node x={3798} y={1590} w={329} h={209} bodyH={89} icon="support" inW={137} outW={123} ins={["Pos|Ind", "Plane"]} outs={["Supp"]}>
          <Bar>Conditions</Bar>
          <div className="mx-[5px] mt-[7px] flex h-[73px] justify-center rounded-[7px] border-2 border-[#5a5a60] bg-[linear-gradient(#ececf0,#c5c4cf_14px,#a8a7b5_14px,#8e8c99)] pt-[8px] font-['Liberation_Sans',sans-serif]">
            {["Tx", "Ty", "Tz", "Rx", "Ry", "Rz"].map((t, i) => (
              <div key={t} className="flex w-[50px] flex-col items-center gap-[13px]">
                <span className="tracking-[0.9px]">{t}</span>
                <Ring on={i < 3} />
              </div>
            ))}
          </div>
        </Node>

        <Node x={4484} y={596} w={277} h={369} icon="assemble" inW={126} outW={82} ins={["Pt", "Elem", "Support", "Load", "CroSec", "Material", "Joint", "Set", "LDist"]} outs={["Model", "Info", "Mass", "COG"]} inButtons={{ 1: <ModButton kind="down" />, 3: <ModButton kind="down" /> }} />

        <Slider x={4874} y={664} w={401} label="Limit distance" labelW={161} value="7.4" knob={174} shape="ring" />
        <Slider x={4874} y={704} w={401} label="Snap length" labelW={143} value="0.50" knob={247} shape="ring" />
        <Node x={5326} y={620} w={261} h={289} icon="felting" inW={109} outW={83} ins={["Model", "LimDist", "SnapLen", "MaxELen", "StartInd", "MaxNCon", "Beam Id"]} outs={["Model"]} />

        <Node x={5702} y={680} w={231} h={169} icon="analyze" inW={76} outW={86} ins={["Model"]} outs={["Model", "Disp", "G", "Energy"]} />

        <div className="absolute" style={place(6024, 967, 209, 82)}>
          <Jagged w={209} h={82} tone="pink" />
          <div className="relative flex h-full justify-between pr-[33px]">
            <div className="flex flex-col py-[1px] pl-[14px]">
              <div className="flex flex-1 items-center">Genome</div>
              <div className="flex flex-1 items-center">Fitness</div>
            </div>
            <div className="flex items-center">
              <Icon name="galapagos" size={44} />
            </div>
          </div>
          <div className="absolute top-[21px] left-0">
            <Port side="l" />
          </div>
          <span className="absolute top-[81px] left-[51px] h-[10px] w-5 rounded-b-full border-4 border-t-0 border-black bg-white" />
        </div>
        <Param x={6040} y={1132}>
          <span className="font-['Liberation_Serif',serif] text-[26px] leading-none font-bold text-white">0.1</span>
        </Param>
        <DataPanel x={6190} y={1104} w={173} h={93} path="{0;0}" gutter={27} rows={["8.702155"]} />

        <ModelView />
        <BeamView />
      </div>
    </main>
  );
}
